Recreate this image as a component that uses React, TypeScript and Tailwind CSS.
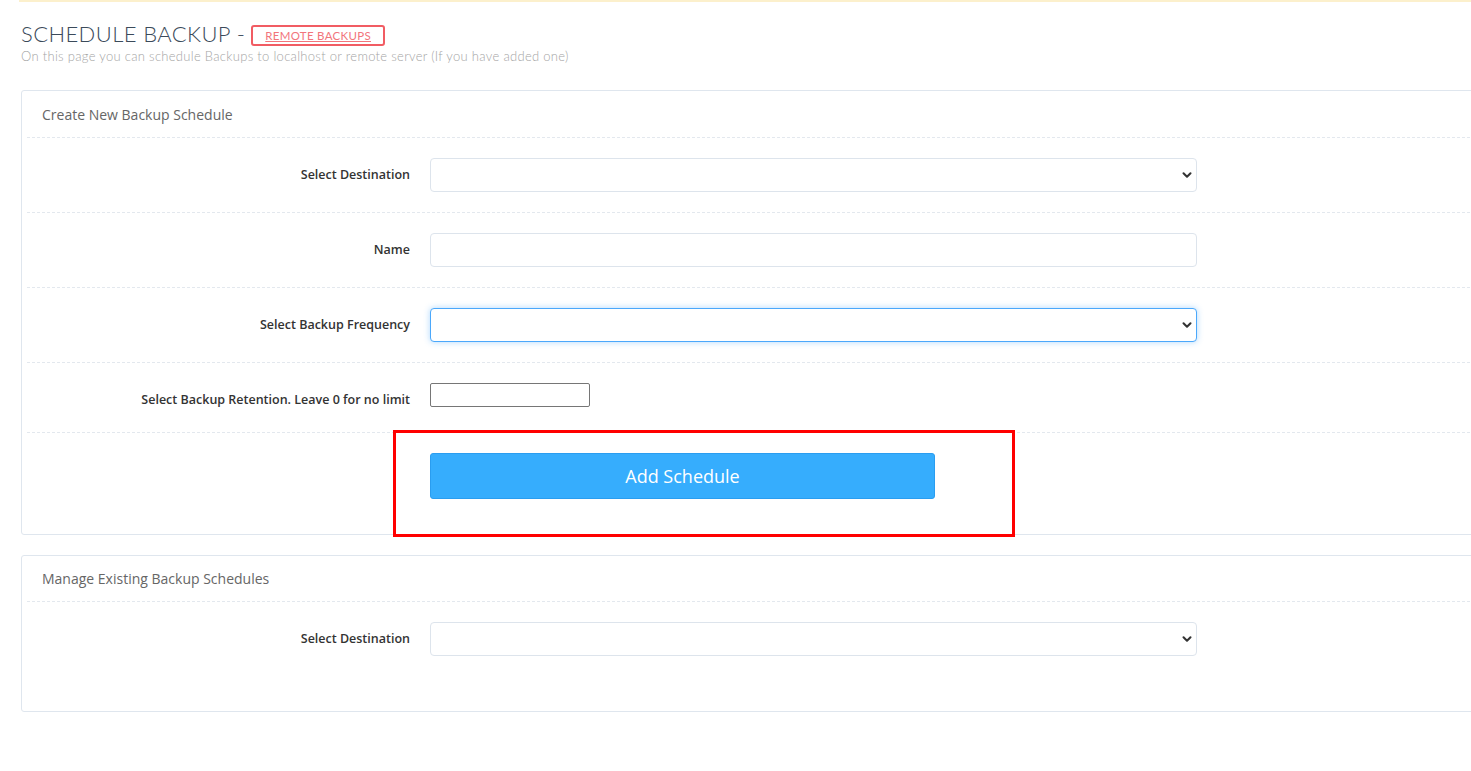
import { ChevronDown } from 'lucide-react'

const labelCls = 'w-[403px] shrink-0 pr-[20px] text-right text-[12.5px] font-semibold text-[#333]'

function SelectBox({ focused = false }: { focused?: boolean }) {
  return (
    <div className="relative w-[767px]">
      <select
        className={`block h-[34px] w-full appearance-none rounded-[4px] border bg-white px-3 text-[13px] outline-none ${
          focused
            ? 'border-[#4ba8fb] shadow-[0_0_6px_rgba(75,168,251,0.45)]'
            : 'border-[#dde4ec]'
        }`}
        defaultValue=""
      >
        <option value=""></option>
      </select>
      <ChevronDown
        className="pointer-events-none absolute right-[3px] top-1/2 h-[14px] w-[14px] -translate-y-1/2 text-[#333]"
        strokeWidth={3.5}
      />
    </div>
  )
}

function Row({ label, children }: { label: string; children: React.ReactNode }) {
  return (
    <div className="flex h-[75px] items-center border-b border-dashed border-[#e3e8ee]">
      <label className={labelCls}>{label}</label>
      {children}
    </div>
  )
}

export default function App() {
  return (
    <div className="h-screen w-full overflow-hidden bg-white font-['Open_Sans','Liberation_Sans',sans-serif]">
      {/* top strip */}
      <div className="ml-[19px] h-[2px] bg-[#fcf0cc]" />

      <div className="pl-[21px]">
        {/* title */}
        <div className="mt-[18px] flex items-center gap-[6px]">
          <h1 className="font-['Lato','Liberation_Sans',sans-serif] text-[22px] font-light leading-[28px] tracking-[0.4px] text-[#3b4a5a]">
            SCHEDULE BACKUP -
          </h1>
          <a
            href="#"
            className="mt-[2px] rounded-[3px] border-2 border-[#f15c63] px-[12px] py-[1px] font-['Lato','Liberation_Sans',sans-serif] text-[11.5px] leading-[15px] tracking-[0.3px] text-[#f2757b] underline"
          >
            REMOTE BACKUPS
          </a>
        </div>
        <p className="mt-[1px] font-['Lato','Liberation_Sans',sans-serif] text-[13px] font-light leading-[15px] tracking-[0.3px] text-[#a5a5a5]">
          On this page you can schedule Backups to localhost or remote server (If you have added one)
        </p>

        {/* create card */}
        <div className="relative mt-[26px] w-[1600px] rounded-[3px] border border-[#dfe6ee] bg-white px-[5px]">
          <div className="flex h-[47px] items-center border-b border-dashed border-[#e3e8ee] pl-[15px] text-[14px] text-[#666]">
            Create New Backup Schedule
          </div>
          <Row label="Select Destination">
            <SelectBox />
          </Row>
          <Row label="Name">
            <input className="h-[34px] w-[767px] rounded-[4px] border border-[#dde4ec] bg-white px-3 text-[13px] outline-none" />
          </Row>
          <Row label="Select Backup Frequency">
            <SelectBox focused />
          </Row>
          <div className="flex h-[70px] items-start border-b border-dashed border-[#e3e8ee] pt-[20px]">
            <label className={`${labelCls} mt-[8px]`}>Select Backup Retention. Leave 0 for no limit</label>
            <input className="h-[24px] w-[160px] rounded-[2px] border border-[#767676] bg-white px-1 text-[13px] outline-none" />
          </div>
          <div className="flex pb-[35px] pl-[403px] pt-[20px]">
            <button className="h-[46px] w-[505px] rounded-[3px] border border-[#2a9df0] bg-[#36adfd] text-[18px] text-white">
              Add Schedule
            </button>
          </div>

          {/* annotation box */}
          <div className="pointer-events-none absolute left-[371px] top-[339px] h-[107px] w-[622px] border-[3px] border-[#ff0000]" />
        </div>

        {/* manage card */}
        <div className="mt-[20px] w-[1600px] rounded-[3px] border border-[#dfe6ee] bg-white px-[5px]">
          <div className="flex h-[46px] items-center border-b border-dashed border-[#e3e8ee] pl-[15px] text-[14px] text-[#666]">
            Manage Existing Backup Schedules
          </div>
          <div className="flex h-[109px] items-start pt-[20px]">
            <label className={`${labelCls} mt-[8px]`}>Select Destination</label>
            <SelectBox />
          </div>
        </div>
      </div>
    </div>
  )
}
